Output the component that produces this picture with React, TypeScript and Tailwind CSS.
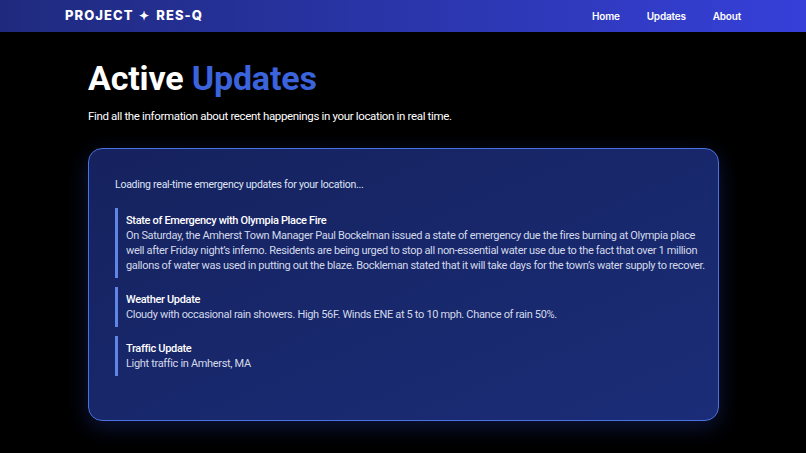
import React from "react";

const updates = [
  {
    title: "State of Emergency with Olympia Place Fire",
    body: "On Saturday, the Amherst Town Manager Paul Bockelman issued a state of emergency due the fires burning at Olympia place well after Friday night’s inferno. Residents are being urged to stop all non-essential water use due to the fact that over 1 million gallons of water was used in putting out the blaze. Bockleman stated that it will take days for the town’s water supply to recover.",
  },
  {
    title: "Weather Update",
    body: "Cloudy with occasional rain showers. High 56F. Winds ENE at 5 to 10 mph. Chance of rain 50%.",
  },
  {
    title: "Traffic Update",
    body: "Light traffic in Amherst, MA",
  },
];

export default function App() {
  return (
    <div className="min-h-[453px] w-full bg-black text-white font-['Roboto',sans-serif]">
      <nav className="flex h-8 items-center justify-between bg-gradient-to-r from-[#1f2a7e] to-[#3640d9] px-[65px]">
        <div className="font-['Inter',sans-serif] text-[13px] font-extrabold tracking-[0.08em] text-white">
          PROJECT <span className="mx-[2px] text-[12px]">✦</span> RES-Q
        </div>
        <div className="flex gap-[27px] font-['Inter',sans-serif] text-[10px] font-semibold tracking-[-0.02em]">
          <a href="#">Home</a>
          <a href="#">Updates</a>
          <a href="#">About</a>
        </div>
      </nav>

      <main className="px-[88px] pt-[26px]">
        <h1 className="text-[34px] font-bold leading-[40px] tracking-[-0.005em]">
          Active <span className="text-[#3b63dc]">Updates</span>
        </h1>
        <p className="mt-[10px] text-[11.5px] leading-[16px] tracking-[-0.03em]">
          Find all the information about recent happenings in your location in real time.
        </p>

        <section className="mt-[24px] h-[273px] w-[631px] rounded-[14px] border border-[#4b72e0] bg-gradient-to-br from-[#15225e] to-[#1b2d78] pl-[26px] pr-[10px] pt-[28px] shadow-[0_6px_22px_rgba(40,70,200,0.3)]">
          <p className="text-[10.5px] leading-[16px] tracking-[-0.024em] text-[#dfe4f4]">
            Loading real-time emergency updates for your location...
          </p>
          <div className="mt-[15px] flex flex-col gap-[9px]">
            {updates.map((u) => (
              <div key={u.title} className="border-l-[3px] border-[#5f86e6] py-[5px] pl-[8px]">
                <h3 className="text-[11px] font-medium leading-[15px] tracking-[-0.03em] text-white">{u.title}</h3>
                <p className="text-[11px] leading-[15px] tracking-[-0.03em] text-[#d3d9ea]">{u.body}</p>
              </div>
            ))}
          </div>
        </section>
      </main>
    </div>
  );
}
